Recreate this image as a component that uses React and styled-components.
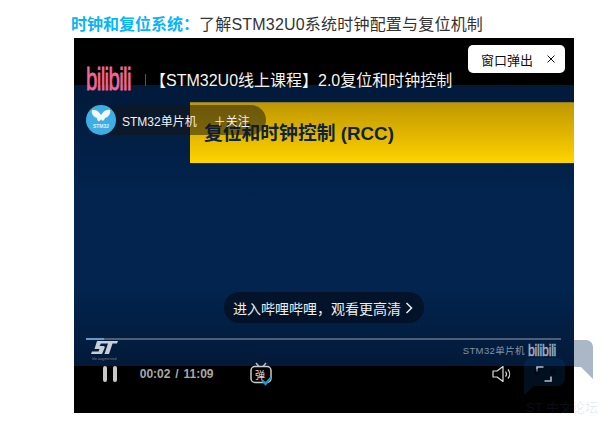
import styled, { createGlobalStyle } from 'styled-components';

const GlobalStyle = createGlobalStyle`
  html, body {
    margin: 0;
    padding: 0;
    background: #fff;
    overflow: hidden;
  }
  body {
    font-family: "Liberation Sans", "Noto Sans CJK SC", sans-serif;
  }
`;

const Page = styled.div`
  position: relative;
  width: 602px;
  height: 423px;
  padding: 15px 0 0 71px;
  box-sizing: border-box;
  overflow: hidden;
`;

const Heading = styled.p`
  margin: 0 0 3px;
  height: 20px;
  font-size: 16px;
  line-height: 20px;
  color: #333;
  white-space: nowrap;
`;

const HeadingKey = styled.strong`
  color: #0ab4fb;
  font-weight: 700;
`;

const HeadingRest = styled.span`
  letter-spacing: 0.2px;
`;

const Player = styled.div`
  position: relative;
  z-index: 1;
  width: 500px;
  height: 375px;
  margin-left: 3px;
  padding-top: 47px;
  box-sizing: border-box;
  background: #000;
  color: #fff;
`;

const Slide = styled.div`
  height: 281px;
  padding-top: 17px;
  box-sizing: border-box;
  display: flex;
  flex-direction: column;
  background: linear-gradient(180deg, #021a3a 0%, #02244f 40%, #02244f 72%, #021a38 100%);
`;

const Banner = styled.div`
  height: 62px;
  margin-left: 116px;
  padding: 0 0 3px 14px;
  box-sizing: border-box;
  display: flex;
  align-items: center;
  border-top: 1px solid #8f7c2a;
  border-bottom: 1px solid #0f2a45;
  background: linear-gradient(180deg, #bf9800 0%, #e0b400 50%, #ffd500 100%);
  color: #0d2440;
  font-size: 18.800px;
  font-weight: 700;
`;

const SlideFooter = styled.div`
  margin: auto 13px 0 12px;
  height: 28px;
`;

const Progress = styled.div`
  height: 2px;
  background: #4d5e76;
`;

const ProgressDone = styled.div`
  width: 18px;
  height: 100%;
  background: #5d9ccc;
`;

const FooterRow = styled.div`
  display: flex;
  align-items: flex-start;
`;

const StMark = styled.div`
  margin: 1px 0 0 2px;
  display: flex;
  flex-direction: column;
  align-items: center;
  width: 32px;
`;

const StTagline = styled.span`
  margin-top: 2px;
  font-size: 5px;
  line-height: 5px;
  color: #6f7f95;
  white-space: nowrap;
  transform: scale(0.75);
`;

const SlideBrand = styled.div`
  margin: 1px -4px 0 auto;
  display: flex;
  align-items: center;
  gap: 3px;
  font-size: 9.500px;
  letter-spacing: 0.4px;
  color: #8492a6;
`;

const BrandMini = styled.span`
  display: block;
  width: 37px;
  height: 18px;
  font-size: 15px;
  line-height: 18px;
  letter-spacing: -0.3px;
  color: #a6b2c1;
  -webkit-text-stroke: 0.4px #a6b2c1;
  transform-origin: left center;
  transform: scale(0.82, 1.15);
`;

const Controls = styled.div`
  height: 47px;
  padding: 0 21px 31px 29px;
  box-sizing: border-box;
  display: flex;
  align-items: center;
  color: #c4c4c4;
`;

const PauseBar = styled.span`
  width: 4px;
  height: 16px;
  border-radius: 2px;
  background: #c9c9c9;
`;

const PauseButton = styled.div`
  display: flex;
  gap: 6px;
  width: 37px;
`;

const Time = styled.span`
  width: 110px;
  font-size: 12px;
  font-weight: 700;
  color: #a8a8a8;
  word-spacing: 1.500px;
  white-space: nowrap;
`;

const ControlIcon = styled.svg`
  display: block;
  flex: none;
  margin-left: ${({ $push }) => $push || '0'};
`;

const Header = styled.div`
  position: absolute;
  top: 28px;
  left: 12px;
  display: flex;
  align-items: center;
  height: 24px;
`;

const BiliLogo = styled.span`
  display: block;
  width: 50px;
  height: 24px;
  font-size: 25px;
  line-height: 24px;
  letter-spacing: -0.800px;
  color: #ef6a98;
  -webkit-text-stroke: 0.600px #ef6a98;
  white-space: nowrap;
  transform-origin: left center;
  transform: scale(0.82, 1.28);
`;

const Separator = styled.span`
  width: 1px;
  height: 12px;
  margin: 4px 0 0 9px;
  background: #555;
`;

const VideoTitle = styled.span`
  margin: 6px 0 0 4px;
  font-size: 16px;
  line-height: 18px;
  white-space: nowrap;
  color: #f4f4f4;
`;

const PopupButton = styled.div`
  position: absolute;
  top: 7px;
  right: 9px;
  width: 97px;
  height: 28px;
  padding: 0 10px 0 13px;
  box-sizing: border-box;
  display: flex;
  align-items: center;
  justify-content: space-between;
  background: #fff;
  border-radius: 5px;
  color: #111;
  font-size: 13px;
`;

const Author = styled.div`
  position: absolute;
  top: 67px;
  left: 12px;
  width: 180px;
  height: 30px;
  display: flex;
  align-items: center;
  border-radius: 15px;
  background: rgba(20, 20, 20, 0.5);
  font-size: 12px;
  color: #f2f2f2;
`;

const Avatar = styled.div`
  position: relative;
  width: 30px;
  height: 30px;
  flex: none;
  border-radius: 50%;
  background: #3daee3;
  overflow: hidden;
  display: flex;
  flex-direction: column;
  align-items: center;
  padding-top: 4px;
  box-sizing: border-box;
`;

const AvatarLabel = styled.span`
  font-size: 5px;
  line-height: 6px;
  font-weight: 700;
  color: #dff2fb;
`;

const AuthorName = styled.span`
  margin-left: 6px;
  white-space: nowrap;
`;

const Follow = styled.span`
  margin-left: 17px;
  white-space: nowrap;
`;

const OpenPill = styled.div`
  position: absolute;
  top: 254px;
  left: 150px;
  width: 200px;
  height: 31px;
  padding-left: 9px;
  box-sizing: border-box;
  display: flex;
  align-items: center;
  gap: 4px;
  border-radius: 16px;
  background: rgba(2, 16, 36, 0.85);
  color: #eee;
  font-size: 14px;
  white-space: nowrap;
`;

const BubbleBack = styled.svg`
  position: absolute;
  left: 520px;
  top: 340px;
`;

const BubbleFront = styled.svg`
  position: absolute;
  z-index: 2;
  left: 523px;
  top: 358px;
  pointer-events: none;
`;

const WatermarkText = styled.span`
  position: absolute;
  z-index: 2;
  left: 526px;
  top: 400px;
  font-size: 13px;
  line-height: 15px;
  color: rgba(70, 110, 170, 0.14);
  white-space: nowrap;
`;

export default function App() {
  return (
    <Page>
      <GlobalStyle />
      <BubbleBack width="74" height="40" viewBox="0 0 74 40">
        <path d="M6 0H66a7 7 0 0 1 7 7V39L61 27H6Z" fill="#aab7c7" />
      </BubbleBack>
      <Heading>
        <HeadingKey>时钟和复位系统：</HeadingKey>
        <HeadingRest>了解STM32U0系统时钟配置与复位机制</HeadingRest>
      </Heading>
      <Player>
        <Slide>
          <Banner>复位和时钟控制 (RCC)</Banner>
          <SlideFooter>
            <Progress>
              <ProgressDone />
            </Progress>
            <FooterRow>
              <StMark>
                <svg width="27" height="13" viewBox="0 0 27 13">
                  <path
                    d="M6 0H27L26 2.500H21.500L18 13H13.500L17 2.500H10L8.500 5H12.500L14 6L11 13H0L1 10.500H7.500L8.500 8H3.500Z"
                    fill="#c7ced8"
                  />
                </svg>
                <StTagline>life.augmented</StTagline>
              </StMark>
              <SlideBrand>
                STM32单片机
                <BrandMini>bilibili</BrandMini>
              </SlideBrand>
            </FooterRow>
          </SlideFooter>
        </Slide>
        <Controls>
          <PauseButton>
            <PauseBar />
            <PauseBar />
          </PauseButton>
          <Time>00:02 / 11:09</Time>
          <ControlIcon width="24" height="24" viewBox="0 0 24 24">
            <path d="M7 1L10 4.500M17 1L14 4.500" stroke="#bbb" strokeWidth="1.500" fill="none" />
            <rect x="2" y="4.500" width="20" height="16" rx="4" stroke="#ccc" strokeWidth="1.500" fill="none" />
            <text x="11" y="16.500" fontSize="10" fill="#ddd" textAnchor="middle">弹</text>
            <path d="M13 18L16.500 22L22 15.500" stroke="#1d9bd1" strokeWidth="2.200" fill="none" />
          </ControlIcon>
          <ControlIcon width="22" height="20" viewBox="0 0 22 20" $push="219px">
            <path
              d="M1 7H5L11 2.500V17.500L5 13H1Z"
              stroke="#ddd"
              strokeWidth="1.200"
              strokeLinejoin="round"
              fill="none"
            />
            <path d="M13.500 7.500A4 4 0 0 1 13.500 12.500M16 5.500A7 7 0 0 1 16 14.500" stroke="#ddd" strokeWidth="1.200" fill="none" />
          </ControlIcon>
          <ControlIcon width="18" height="18" viewBox="0 0 18 18" $push="21px">
            <path d="M2 6.500V2H8.500M16 11.500V16H9.500" stroke="#ddd" strokeWidth="1.600" fill="none" />
          </ControlIcon>
        </Controls>
        <Header>
          <BiliLogo>bilibili</BiliLogo>
          <Separator />
          <VideoTitle>【STM32U0线上课程】2.0复位和时钟控制</VideoTitle>
        </Header>
        <PopupButton>
          窗口弹出
          <svg width="8" height="8" viewBox="0 0 8 8">
            <path d="M0.500 0.500L7.500 7.500M7.500 0.500L0.500 7.500" stroke="#111" strokeWidth="1" />
          </svg>
        </PopupButton>
        <Author>
          <Avatar>
            <svg width="20" height="14" viewBox="0 0 20 14">
              <path
                d="M1 1C5 0 8 3 10 6C12 3 15 0 19 1C20 4 18 8 14 9C13 12 11 13 10 10C9 13 6 13 6 9C2 8 0 4 1 1Z"
                fill="#f1f8fc"
              />
            </svg>
            <AvatarLabel>STM32</AvatarLabel>
          </Avatar>
          <AuthorName>STM32单片机</AuthorName>
          <Follow>＋关注</Follow>
        </Author>
        <OpenPill>
          进入哔哩哔哩，观看更高清
          <svg width="8" height="12" viewBox="0 0 8 12">
            <path d="M1.500 1L6.500 6L1.500 11" stroke="#eee" strokeWidth="1.500" fill="none" />
          </svg>
        </OpenPill>
      </Player>
      <BubbleFront width="44" height="38" viewBox="0 0 44 38">
        <path d="M8 0H34a8 8 0 0 1 8 8V20a8 8 0 0 1-8 8H11L1 37V8a8 8 0 0 1 7-8Z" fill="rgba(10,70,140,0.22)" />
        <circle cx="14" cy="14" r="3" fill="rgba(0,0,0,0.4)" />
        <circle cx="30" cy="14" r="3" fill="rgba(0,0,0,0.4)" />
      </BubbleFront>
      <WatermarkText>ST 中文论坛</WatermarkText>
    </Page>
  );
}
